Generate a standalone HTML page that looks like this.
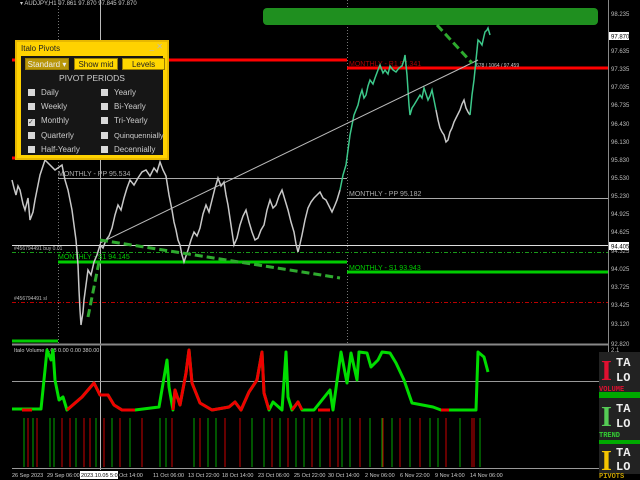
<!DOCTYPE html>
<html><head><meta charset="utf-8"><style>
html,body{margin:0;padding:0;background:#000;width:640px;height:480px;overflow:hidden;font-family:"Liberation Sans",sans-serif}
#p{position:absolute;left:15px;top:40px;width:150px;height:116px;background:#ffd200;border:2px solid #e8b800}
#pi{position:absolute;left:4px;top:14px;width:142px;height:99px;background:#161616}
.t{position:absolute;font-size:8px;color:#222;left:4px;top:2px}
.b{position:absolute;top:3px;height:12px;font-size:8px;line-height:12px;text-align:center;background:#ffd700;color:#222;border:1px solid #9a7d00;box-sizing:border-box;white-space:nowrap}
.cb{position:absolute;font-size:8px;color:#ccc;white-space:nowrap}
.cb i{display:inline-block;width:7px;height:7px;background:#d8d8d8;margin-right:6px;vertical-align:-1px;font-style:normal;font-size:7px;line-height:7px;color:#333}
</style></head><body>
<svg width="640" height="480" style="position:absolute;left:0;top:0" font-family="Liberation Sans" font-size="6">
<line x1="608.5" y1="0" x2="608.5" y2="470" stroke="#888"/>
<g fill="#bbb">
<text x="611" y="16">98.235</text><text x="611" y="53">97.635</text><text x="611" y="71">97.335</text><text x="611" y="89">97.035</text><text x="611" y="107">96.735</text><text x="611" y="126">96.430</text><text x="611" y="144">96.130</text><text x="611" y="162">95.830</text><text x="611" y="180">95.530</text><text x="611" y="198">95.230</text><text x="611" y="216">94.925</text><text x="611" y="234">94.625</text><text x="611" y="253">94.325</text><text x="611" y="271">94.025</text><text x="611" y="289">93.725</text><text x="611" y="307">93.425</text><text x="611" y="326">93.120</text><text x="611" y="346">92.820</text><text x="611" y="352">2.1</text>
</g>
<rect x="609" y="32" width="20" height="8" fill="#fff"/><text x="611" y="38.5" fill="#000">97.870</text>
<rect x="609" y="242" width="20" height="8" fill="#fff"/><text x="611" y="248.5" fill="#000">94.405</text>
<text x="20" y="5" fill="#ccc">▾ AUDJPY,H1  97.861 97.870 97.845 97.870</text>
<line x1="58.5" y1="0" x2="58.5" y2="345" stroke="#777" stroke-dasharray="1,2"/>
<line x1="347.5" y1="0" x2="347.5" y2="345" stroke="#777" stroke-dasharray="1,2"/>
<line x1="100.5" y1="0" x2="100.5" y2="470" stroke="#bbb"/>
<rect x="263" y="8" width="335" height="17" rx="4" fill="#1f8f1f"/>
<line x1="12" y1="60" x2="347" y2="60" stroke="#f00" stroke-width="3"/>
<line x1="347" y1="68" x2="608" y2="68" stroke="#f00" stroke-width="3"/>
<line x1="12" y1="158" x2="20" y2="158" stroke="#f00" stroke-width="3"/>
<text x="349" y="66" fill="#a00" font-size="7">MONTHLY - R1 97.341</text>
<line x1="58" y1="178.5" x2="347" y2="178.5" stroke="#aaa"/>
<text x="58" y="176" fill="#aaa" font-size="7">MONTHLY - PP 95.534</text>
<line x1="347" y1="198.5" x2="608" y2="198.5" stroke="#aaa"/>
<text x="349" y="196" fill="#aaa" font-size="7">MONTHLY - PP 95.182</text>
<line x1="12" y1="245.5" x2="608" y2="245.5" stroke="#ddd"/>
<line x1="12" y1="252.5" x2="608" y2="252.5" stroke="#1a9a1a" stroke-dasharray="4,2,1,2"/>
<line x1="12" y1="302.5" x2="608" y2="302.5" stroke="#b00" stroke-dasharray="4,2,1,2"/>
<text x="14" y="250" fill="#bbb" font-size="5">#456794491 buy 0.01</text>
<text x="14" y="300" fill="#bbb" font-size="5">#456794491 sl</text>
<line x1="58" y1="262" x2="347" y2="262" stroke="#0c0" stroke-width="3"/>
<text x="58" y="259" fill="#0c0" font-size="7">MONTHLY - S1 94.145</text>
<line x1="347" y1="272" x2="608" y2="272" stroke="#0c0" stroke-width="3"/>
<text x="349" y="270" fill="#0c0" font-size="7">MONTHLY - S1 93.943</text>
<line x1="12" y1="341" x2="58" y2="341" stroke="#0c0" stroke-width="3"/>
<polyline fill="none" stroke="#c8c8c8" stroke-width="1.5" points="12,180 14,188 16,195 18,186 20,190 23,204 25,210 28,198 30,220 33,212 35,200 38,185 40,175 45,160 55,170 62,165 65,180 68,190 70,200 72,210 74,225 76,240 78,265 79,290 80,310 81,325 83,312 84,300 86,285 88,270 91,275 94,262 97,255 100,245 103,248 106,240 109,236 112,228 115,215 118,205 121,210 124,198 127,188 130,180 134,185 138,178 142,172 146,170 150,176 154,168 157,172 160,162 163,170 166,176 169,195 172,210 174,222 176,230 178,240 180,245 182,255 184,262 186,256 188,250 191,240 194,232 197,236 200,228 203,214 206,205 209,212 212,200 215,188 218,178 221,186 224,182 226,195 228,205 231,225 234,245 237,238 240,225 243,216 246,210 249,222 252,232 255,240 258,238 261,230 264,225 267,210 270,200 273,208 276,205 279,196 282,190 285,200 288,210 291,222 294,232 296,244 298,252 300,244 302,235 305,220 308,208 311,202 314,198 317,195 320,192 323,198 326,200 329,206 332,212 335,205 337,200 340,190"/>
<polyline fill="none" stroke="#3cc88a" stroke-width="1.5" points="340,190 343,175 346,165 348,150 350,135 352,125 354,115 356,110 358,105 360,96 362,90 364,98 366,95 368,86 370,80 373,84 375,78 378,70 380,65 383,73 385,70 388,74 390,66 393,70 396,72 399,68 402,66 404,60 405,55 407,75 408,90 409,105 410,115 412,108 414,105 417,100 420,95 422,98 424,88 426,94 428,100 430,96 432,90 434,100 436,110"/>
<polyline fill="none" stroke="#c8c8c8" stroke-width="1.5" points="436,110 438,120 440,128 442,132 444,135 446,142 448,140 450,132 452,128 454,122 456,118 458,114 460,110 462,104 464,100 466,108 468,112 470,115"/>
<polyline fill="none" stroke="#3cc88a" stroke-width="1.5" points="470,115 472,95 474,80 476,60 478,40 480,42 482,45 484,36 485,32 487,30 488,28 490,35"/>
<line x1="100" y1="243" x2="478" y2="60" stroke="#bbb" stroke-width="1"/>
<text x="476" y="67" fill="#ccc" font-size="5">678 / 1064 / 97.459</text>
<g stroke="#2eaa2e" stroke-width="3" stroke-dasharray="8,4" fill="none">
<line x1="100" y1="240" x2="340" y2="278"/>
<line x1="88" y1="317" x2="99" y2="262"/>
<line x1="437" y1="25" x2="472" y2="63"/>
</g>
<line x1="12" y1="344.5" x2="608" y2="344.5" stroke="#888" stroke-width="2"/>
<text x="14" y="352" fill="#ccc" font-size="5.5">Italo Volume 1.68 0.00 0.00 380.00</text>
<line x1="12" y1="381.5" x2="608" y2="381.5" stroke="#999"/>
<polyline fill="none" stroke="#0d0" stroke-width="3" stroke-linejoin="round" points="12,409 41,409 45,370 47,350 51,360 53,350 55,380 59,400 63,397 67,410 82,397 94,383 100,395 108,395 114,405 122,410 135,410 159,407 167,360 169,387 173,410 175,390 180,405 186,373 189,350 192,383 200,403 212,410 229,407 235,402 241,410 249,392 257,380 262,352 264,393 269,410 273,402 282,410 286,352 288,397 292,410 298,402 302,410 314,410 330,390 333,410 341,352 347,383 351,353 357,380 359,352 367,353 371,367 378,360 382,352 390,353 396,363 404,380 412,403 433,407 441,410 449,410 476,410 478,352 484,357 488,372"/>
<g fill="none" stroke="#e00" stroke-width="3" stroke-linejoin="round">
<polyline points="67,410 82,397 94,383 100,395 108,395 114,405 122,410 135,410"/>
<polyline points="173,410 175,390 180,405 186,373 189,350 192,383 200,403 212,410 229,407 235,402 241,410 249,392 257,380 262,352 264,393 269,410"/>
<polyline points="292,410 298,402 302,410"/><polyline points="22,410 32,410"/><polyline points="318,410 330,410"/><polyline points="441,410 449,410"/>
</g>
<g stroke-width="1">
<path stroke="#c00" d="M28 418V467M37 418V467M62 418V467M70 418V467M84 418V467M90 418V467M104 418V467M120 418V467M142 418V467M172 418V467M200 418V467M225 418V467M240 418V467M272 418V467M288 418V467M312 418V467M330 418V467M338 418V467M360 418V467M383 418V467M400 418V467M420 418V467M446 418V467M472 418V467M474 418V467"/>
<path stroke="#0a0" d="M24 418V467M33 418V467M50 418V467M54 418V467M76 418V467M96 418V467M112 418V467M130 418V467M160 418V467M166 418V467M194 418V467M208 418V467M216 418V467M252 418V467M264 418V467M280 418V467M296 418V467M304 418V467M320 418V467M342 418V467M350 418V467M370 418V467M382 418V467M392 418V467M410 418V467M430 418V467M438 418V467M460 418V467M480 418V467"/>
</g>
<line x1="12" y1="468.5" x2="608" y2="468.5" stroke="#999"/>
<g fill="#ccc" font-size="5.5">
<text x="12" y="477">26 Sep 2023</text><text x="47" y="477">29 Sep 06:00</text><text x="119" y="477">Oct 14:00</text><text x="153" y="477">11 Oct 06:00</text><text x="188" y="477">13 Oct 22:00</text><text x="222" y="477">18 Oct 14:00</text><text x="258" y="477">23 Oct 06:00</text><text x="294" y="477">25 Oct 22:00</text><text x="328" y="477">30 Oct 14:00</text><text x="365" y="477">2 Nov 06:00</text><text x="400" y="477">6 Nov 22:00</text><text x="435" y="477">9 Nov 14:00</text><text x="470" y="477">14 Nov 06:00</text>
</g>
<rect x="80" y="471" width="38" height="8" fill="#fff"/><text x="81" y="477" fill="#000" font-size="5.5">2023.10.05 5:00</text>
<g font-family="Liberation Mono" font-weight="bold">
<rect x="599" y="352" width="41" height="42" fill="#222"/>
<text x="601" y="380" fill="#e01030" font-size="28" font-family="Liberation Serif">I</text>
<text x="616" y="366" fill="#eee" font-size="12">TA</text><text x="616" y="381" fill="#eee" font-size="12">LO</text>
<text x="599" y="391" fill="#e01030" font-size="7">VOLUME</text>
<rect x="599" y="392" width="41" height="6" fill="#0a0"/>
<rect x="599" y="398" width="41" height="42" fill="#222"/>
<text x="601" y="426" fill="#5c5" font-size="28" font-family="Liberation Serif">I</text>
<text x="616" y="412" fill="#eee" font-size="12">TA</text><text x="616" y="427" fill="#eee" font-size="12">LO</text>
<text x="599" y="437" fill="#3c3" font-size="7">TREND</text>
<rect x="599" y="440" width="41" height="4" fill="#0a0"/>
<rect x="599" y="444" width="41" height="30" fill="#222"/>
<text x="601" y="470" fill="#f5c400" font-size="28" font-family="Liberation Serif">I</text>
<text x="616" y="456" fill="#eee" font-size="12">TA</text><text x="616" y="470" fill="#eee" font-size="12">LO</text>
<text x="599" y="478" fill="#c8a000" font-size="7">PIVOTS</text>
</g>
</svg>
<div id="p"><span class="t">Italo Pivots</span><span style="position:absolute;right:4px;top:0;font-size:8px;color:#bbb">_ ✕</span>
<div id="pi">
<div class="b" style="left:4px;width:44px;background:#b8960a;color:#eee;top:2px">Standard ▾</div>
<div class="b" style="left:53px;width:44px;top:2px">Show mid</div>
<div class="b" style="left:101px;width:43px;top:2px">Levels</div>
<div style="position:absolute;left:0;width:142px;top:17px;text-align:center;font-size:8.5px;color:#ccc">PIVOT PERIODS</div>
<div class="cb" style="left:7px;top:32px"><i></i>Daily</div>
<div class="cb" style="left:7px;top:46px"><i></i>Weekly</div>
<div class="cb" style="left:7px;top:60px"><i>✓</i>Monthly</div>
<div class="cb" style="left:7px;top:75px"><i></i>Quarterly</div>
<div class="cb" style="left:7px;top:89px"><i></i>Half-Yearly</div>
<div class="cb" style="left:80px;top:32px"><i></i>Yearly</div>
<div class="cb" style="left:80px;top:46px"><i></i>Bi-Yearly</div>
<div class="cb" style="left:80px;top:60px"><i></i>Tri-Yearly</div>
<div class="cb" style="left:80px;top:75px;font-size:7.5px"><i></i>Quinquennially</div>
<div class="cb" style="left:80px;top:89px"><i></i>Decennially</div>
</div></div>
</body></html>
